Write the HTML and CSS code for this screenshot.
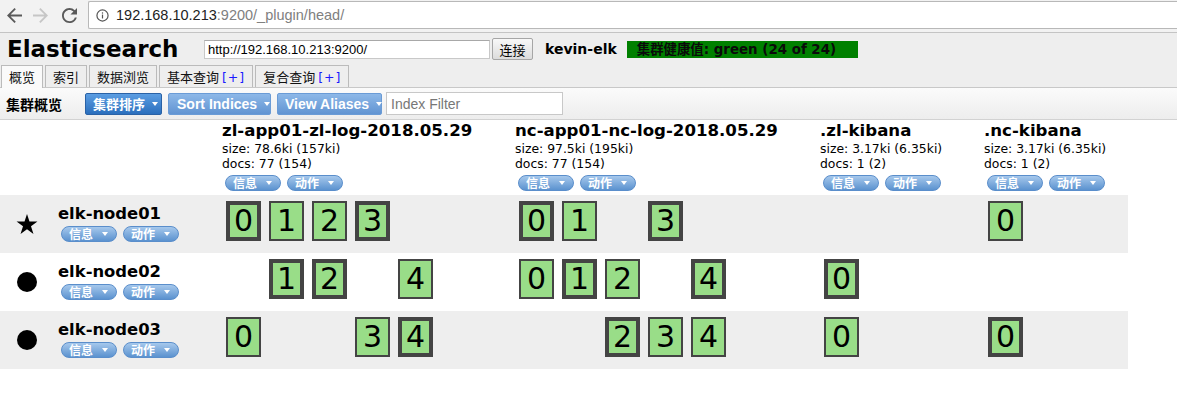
FILE: index.html
```html
<!DOCTYPE html>
<html lang="zh-CN">
<head>
<meta charset="utf-8">
<title>Elasticsearch head</title>
<link rel="stylesheet" href="styles.css">
</head>
<body>
<div class="browser">
  <div class="navbtns">
    <svg class="nav back" viewBox="4 4 16 16"><path d="M20 11H7.83l5.59-5.59L12 4l-8 8 8 8 1.41-1.41L7.83 13H20v-2z"/></svg>
    <svg class="nav fwd" viewBox="4 4 16 16"><path d="M12 4l-1.41 1.41L16.17 11H4v2h12.17l-5.58 5.59L12 20l8-8z"/></svg>
    <svg class="nav reload" viewBox="4 4 16 16"><path d="M17.65 6.35A7.96 7.96 0 0 0 12 4c-4.42 0-7.990 3.58-7.99 8s3.57 8 7.99 8c3.73 0 6.84-2.55 7.73-6h-2.08A5.99 5.99 0 0 1 12 18c-3.31 0-6-2.69-6-6s2.69-6 6-6c1.66 0 3.14.69 4.22 1.78L13 11h7V4l-2.35 2.35z"/></svg>
  </div>
  <div class="omnibox">
    <svg class="info" viewBox="0 0 14 14"><circle cx="7" cy="7" r="6" fill="none" stroke="#555" stroke-width="1.3"/><rect x="6.35" y="6" width="1.3" height="4.2" fill="#555"/><rect x="6.35" y="3.6" width="1.3" height="1.4" fill="#555"/></svg>
    <span class="host">192.168.10.213</span><span class="path">:9200/_plugin/head/</span>
  </div>
</div>

<div class="app-header">
  <div class="connect">
    <h1 class="logo">Elasticsearch</h1>
    <input class="url" type="text" value="http://192.168.10.213:9200/">
    <button class="connect-btn">连接</button>
    <span class="cluster-name">kevin-elk</span>
    <span class="health">集群健康值: green (24 of 24)</span>
  </div>
  <div class="tabs">
    <div class="tab active">概览</div>
    <div class="tab">索引</div>
    <div class="tab">数据浏览</div>
    <div class="tab">基本查询 <span class="plus">[+]</span></div>
    <div class="tab">复合查询 <span class="plus">[+]</span></div>
  </div>
</div>

<div class="toolbar">
  <span class="toolbar-label">集群概览</span>
  <span class="tbtn dark w1">集群排序<i class="caret"></i></span>
  <span class="tbtn light w2">Sort Indices<i class="caret"></i></span>
  <span class="tbtn light w3">View Aliases<i class="caret"></i></span>
  <input class="filter" type="text" placeholder="Index Filter">
</div>

<div class="nodes">
  <div class="row head">
    <div class="cell"></div>
    <div class="cell"></div>
    <div class="cell index">
      <div class="iname">zl-app01-zl-log-2018.05.29</div>
      <div class="istat">size: 78.6ki (157ki)</div>
      <div class="istat">docs: 77 (154)</div>
      <div class="pills"><span class="pill">信息<i class="caret"></i></span><span class="pill">动作<i class="caret"></i></span></div>
    </div>
    <div class="cell index">
      <div class="iname">nc-app01-nc-log-2018.05.29</div>
      <div class="istat">size: 97.5ki (195ki)</div>
      <div class="istat">docs: 77 (154)</div>
      <div class="pills"><span class="pill">信息<i class="caret"></i></span><span class="pill">动作<i class="caret"></i></span></div>
    </div>
    <div class="cell index">
      <div class="iname">.zl-kibana</div>
      <div class="istat">size: 3.17ki (6.35ki)</div>
      <div class="istat">docs: 1 (2)</div>
      <div class="pills"><span class="pill">信息<i class="caret"></i></span><span class="pill">动作<i class="caret"></i></span></div>
    </div>
    <div class="cell index">
      <div class="iname">.nc-kibana</div>
      <div class="istat">size: 3.17ki (6.35ki)</div>
      <div class="istat">docs: 1 (2)</div>
      <div class="pills"><span class="pill">信息<i class="caret"></i></span><span class="pill">动作<i class="caret"></i></span></div>
    </div>
  </div>

  <div class="row shade">
    <div class="cell icon"><svg class="star" viewBox="0 0 22 20"><polygon points="11,0 13.47,7.6 21.46,7.6 14.99,12.3 17.47,19.9 11,15.2 4.53,19.9 7.01,12.3 0.54,7.6 8.53,7.6"/></svg></div>
    <div class="cell name">
      <div class="nname">elk-node01</div>
      <div class="pills"><span class="pill">信息<i class="caret"></i></span><span class="pill">动作<i class="caret"></i></span></div>
    </div>
    <div class="cell shards"><div class="shard p">0</div><div class="shard">1</div><div class="shard">2</div><div class="shard p">3</div></div>
    <div class="cell shards"><div class="shard p">0</div><div class="shard">1</div><div class="shard none"></div><div class="shard p">3</div></div>
    <div class="cell shards"></div>
    <div class="cell shards"><div class="shard">0</div></div>
  </div>

  <div class="row">
    <div class="cell icon"><span class="dot"></span></div>
    <div class="cell name">
      <div class="nname">elk-node02</div>
      <div class="pills"><span class="pill">信息<i class="caret"></i></span><span class="pill">动作<i class="caret"></i></span></div>
    </div>
    <div class="cell shards"><div class="shard none"></div><div class="shard p">1</div><div class="shard p">2</div><div class="shard none"></div><div class="shard">4</div></div>
    <div class="cell shards"><div class="shard">0</div><div class="shard p">1</div><div class="shard">2</div><div class="shard none"></div><div class="shard p">4</div></div>
    <div class="cell shards"><div class="shard p">0</div></div>
    <div class="cell shards"></div>
  </div>

  <div class="row shade">
    <div class="cell icon"><span class="dot"></span></div>
    <div class="cell name">
      <div class="nname">elk-node03</div>
      <div class="pills"><span class="pill">信息<i class="caret"></i></span><span class="pill">动作<i class="caret"></i></span></div>
    </div>
    <div class="cell shards"><div class="shard">0</div><div class="shard none"></div><div class="shard none"></div><div class="shard">3</div><div class="shard p">4</div></div>
    <div class="cell shards"><div class="shard none"></div><div class="shard none"></div><div class="shard p">2</div><div class="shard">3</div><div class="shard">4</div></div>
    <div class="cell shards"><div class="shard">0</div></div>
    <div class="cell shards"><div class="shard p">0</div></div>
  </div>
</div>
</body>
</html>
```

FILE: styles.css
```css
* { box-sizing: border-box; }
html, body { margin: 0; padding: 0; }
body {
  width: 1177px;
  height: 418px;
  overflow: hidden;
  background: #fff;
  color: #000;
  font-family: "DejaVu Sans", "Noto Sans CJK SC", sans-serif;
}

/* ---------- browser chrome ---------- */
.browser {
  height: 33px;
  background: #f2f2f2;
  border-bottom: 1px solid #c4c4c4;
  display: flex;
  align-items: flex-start;
  padding-top: 1px;
}
.navbtns {
  display: flex;
  align-items: center;
  width: 88px;
  height: 28px;
  flex: none;
}
.nav { width: 15px; height: 15px; fill: #5a5a5a; flex: none; }
.back { margin-left: 7px; }
.fwd { margin-left: 11px; fill: #c6c6c6; }
.reload { margin-left: 14px; }
.omnibox {
  flex: 1;
  height: 28px;
  background: #fff;
  border: 1px solid #b8b8b8;
  border-right: none;
  border-radius: 2px 0 0 2px;
  display: flex;
  align-items: center;
  font-family: "Liberation Sans", Arial, sans-serif;
  font-size: 14.5px;
}
.info { width: 13px; height: 13px; margin-left: 7px; margin-right: 7px; flex: none; }
.host { color: #222; }
.path { color: #808080; }

/* ---------- app header ---------- */
.app-header {
  background: #eee;
  border-bottom: 1px solid #c8c8c8;
}
.connect {
  height: 32px;
  display: flex;
  align-items: center;
  padding-left: 7px;
}
.logo {
  margin: 0;
  width: 197px;
  flex: none;
  font-size: 23px;
  font-weight: bold;
  font-family: "DejaVu Sans", sans-serif;
}
.url {
  width: 286px;
  height: 19px;
  margin: 0;
  border: 1px solid #c8c8c8;
  border-top-color: #a8a8a8;
  background: #fff;
  padding: 0 3px;
  font-family: "Liberation Sans", Arial, sans-serif;
  font-size: 13px;
  color: #000;
}
.connect-btn {
  margin: 0 0 0 2px;
  width: 41px;
  height: 22px;
  padding: 0;
  border: 1px solid #a6a6a6;
  border-radius: 2px;
  background: linear-gradient(#f8f8f8, #dcdcdc);
  font-family: "Noto Sans CJK SC", sans-serif;
  font-size: 13px;
  color: #000;
}
.cluster-name {
  margin-left: 12px;
  font-weight: bold;
  font-size: 14px;
}
.health {
  margin-left: 10px;
  width: 231px;
  height: 17px;
  line-height: 17px;
  padding: 0 0 0 10px;
  background: #008000;
  color: #0a0a0a;
  font-weight: bold;
  font-size: 13.4px;
  white-space: nowrap;
}

.tabs {
  height: 22px;
  display: flex;
  align-items: flex-end;
}
.tab {
  height: 22px;
  margin-left: 2px;
  padding: 0 7px;
  border: 1px solid #bbb;
  border-bottom: none;
  background: #eee;
  font-family: "Noto Sans CJK SC", sans-serif;
  font-size: 13px;
  line-height: 21px;
  color: #111;
  white-space: nowrap;
}
.tab:first-child { margin-left: 1px; }
.tab.active {
  height: 23px;
  margin-bottom: -1px;
  background: #fafafa;
}
.plus { color: #1a1aff; font-family: "DejaVu Sans", sans-serif; font-size: 12.5px; letter-spacing: 1px; }

/* ---------- toolbar ---------- */
.toolbar {
  height: 32px;
  display: flex;
  align-items: center;
  padding-left: 6px;
  background: linear-gradient(#fbfbfb, #ededed);
  border-bottom: 1px solid #d2d2d2;
}
.toolbar-label {
  width: 79px;
  flex: none;
  font-family: "Noto Sans CJK SC", sans-serif;
  font-weight: bold;
  font-size: 14px;
}
.tbtn {
  height: 22px;
  margin-right: 6px;
  padding-left: 7px;
  display: flex;
  align-items: center;
  border-radius: 2px;
  color: #fff;
  font-family: "Liberation Sans", "Noto Sans CJK SC", sans-serif;
  font-weight: bold;
  font-size: 14px;
  white-space: nowrap;
}
.tbtn .caret { margin-left: 7px; }
.tbtn.dark {
  background: linear-gradient(#5b9de2, #2b6fbd);
  border: 1px solid #2a62a6;
  font-size: 13px;
}
.tbtn.light {
  background: linear-gradient(#8db8e8, #6194d2);
  border: 1px solid #6a9bd6;
}
.w1 { width: 77px; }
.w2 { width: 103px; padding-left: 8px; }
.w3 { width: 105px; padding-left: 7px; margin-right: 4px; }
.caret {
  display: inline-block;
  width: 0;
  height: 0;
  border-left: 3.5px solid transparent;
  border-right: 3.5px solid transparent;
  border-top: 4px solid #fff;
  flex: none;
}
.filter {
  width: 177px;
  height: 23px;
  margin: 0;
  padding: 0 4px;
  border: 1px solid #c8c8c8;
  background: #fff;
  font-family: "Liberation Sans", Arial, sans-serif;
  font-size: 14px;
}
.filter::placeholder { color: #777; }

/* ---------- nodes view ---------- */
.nodes { width: 1128px; }
.row {
  display: grid;
  grid-template-columns: 58px 164px 293px 305px 164px 144px;
  height: 58px;
}
.row.head { height: 75px; }
.row.shade { background: #eee; }
.cell { min-width: 0; }
.index { padding-top: 1px; }
.iname {
  font-size: 16.6px;
  font-weight: bold;
  line-height: 20px;
  white-space: nowrap;
}
.istat {
  font-size: 12.4px;
  line-height: 15px;
  white-space: nowrap;
}
.index .pills { margin-top: 4px; }
.pills {
  display: flex;
  gap: 6px;
  margin-left: 3px;
}
.pill {
  width: 56px;
  height: 16px;
  display: flex;
  align-items: center;
  padding-left: 7px;
  border: 1px solid #5a8ecb;
  border-radius: 8px;
  background: linear-gradient(#a6c8ec, #5b92cf);
  color: #fff;
  font-family: "Noto Sans CJK SC", sans-serif;
  font-weight: bold;
  font-size: 12px;
  line-height: 14px;
}
.pill .caret { margin-left: 9px; }

.icon {
  display: flex;
  align-items: center;
  justify-content: center;
  padding-right: 4px;
}
.star { width: 22px; height: 20px; fill: #000; }
.dot {
  width: 20px;
  height: 20px;
  border-radius: 50%;
  background: #000;
}
.name { padding-top: 9px; }
.nname {
  font-size: 16.4px;
  font-weight: bold;
  line-height: 20px;
}
.name .pills { margin-top: 2px; }

.shards {
  display: flex;
  align-items: flex-start;
  gap: 8px;
  padding: 6px 0 0 4px;
}
.shard {
  width: 35px;
  height: 40px;
  flex: none;
  border: 2px solid #444;
  background: #99dd88;
  text-align: center;
  font-size: 30px;
  line-height: 36px;
}
.shard.p { border-width: 4px; line-height: 32px; }
.shard.none { visibility: hidden; }
```
